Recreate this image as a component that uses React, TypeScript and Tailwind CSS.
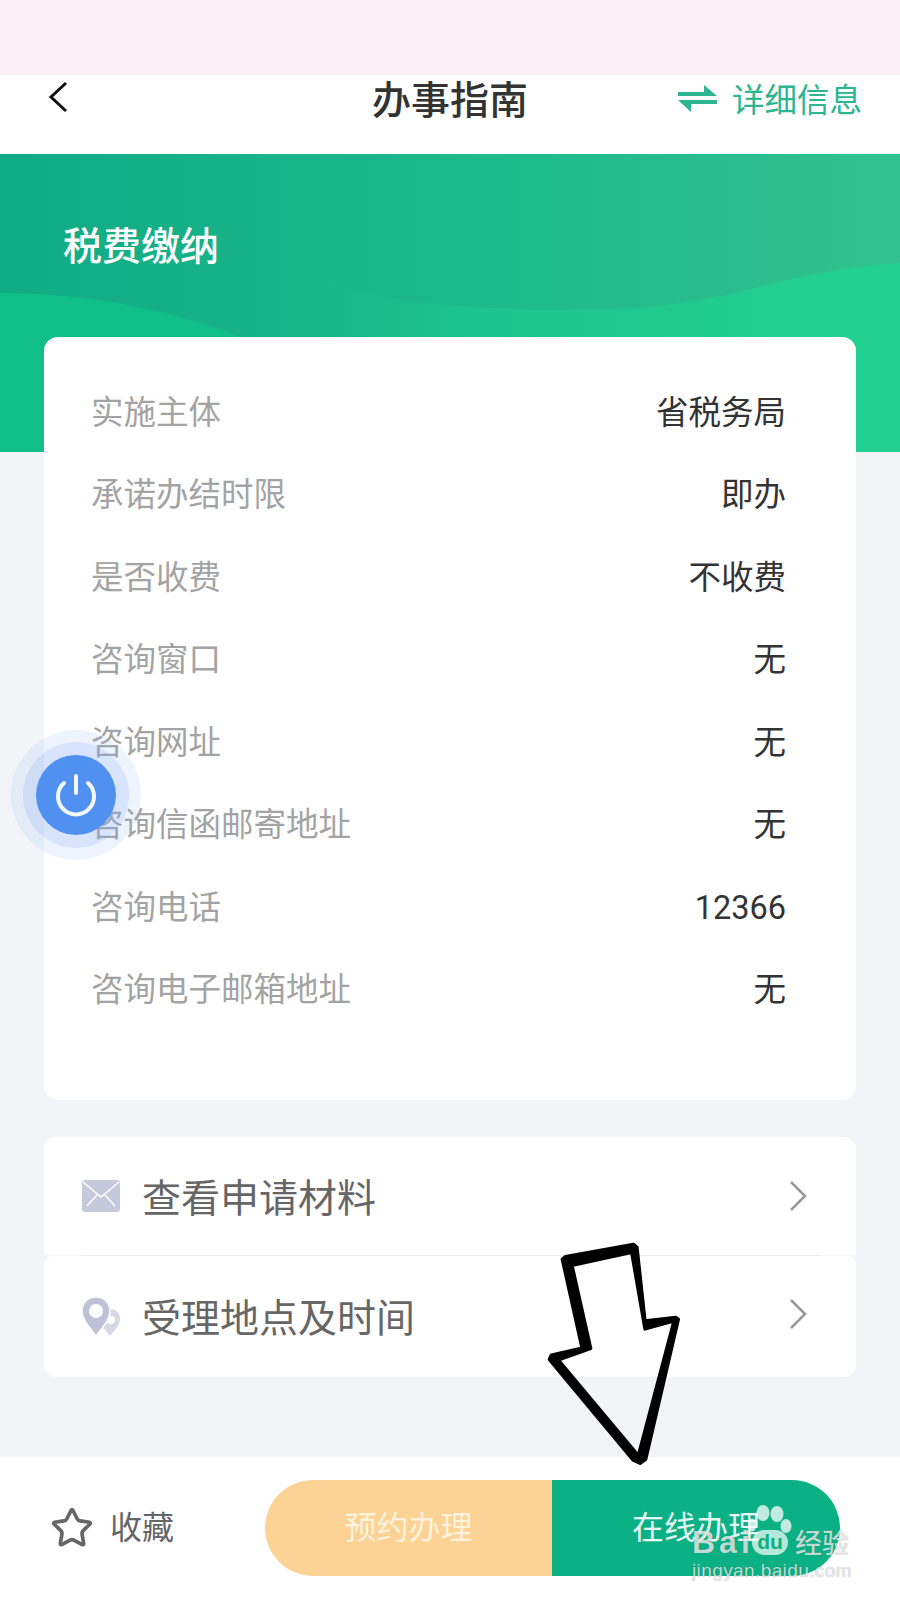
import React from 'react';
import { Star } from 'lucide-react';

const infoRows = [
  { label: '实施主体', value: '省税务局' },
  { label: '承诺办结时限', value: '即办' },
  { label: '是否收费', value: '不收费' },
  { label: '咨询窗口', value: '无' },
  { label: '咨询网址', value: '无' },
  { label: '咨询信函邮寄地址', value: '无' },
  { label: '咨询电话', value: '12366' },
  { label: '咨询电子邮箱地址', value: '无' },
];

const Chevron = () => (
  <svg width="20" height="32" viewBox="0 0 20 32" fill="none" stroke="#9a9a9a" strokeWidth="2.6">
    <path d="M3 2 L17 16 L3 30" />
  </svg>
);

const MailIcon = () => (
  <svg width="38" height="32" viewBox="0 0 38 32">
    <rect width="38" height="32" rx="3" fill="#c6c9dc" />
    <path d="M1 2 L19 17 L37 2 M5 26 L15 15 M33 26 L23 15" fill="none" stroke="#fff" strokeWidth="1.6" />
  </svg>
);

const PinsIcon = () => (
  <svg width="38" height="40" viewBox="0 0 38 40">
    <path d="M28 12 C34 12 38 16 38 22 C38 28 32 34 28 39 C24 34 18 28 18 22 C18 16 22 12 28 12 Z" fill="#d6d8e5" />
    <circle cx="29" cy="23" r="4" fill="#fff" />
    <path d="M14 0 C22 0 28 6 28 14 C28 23 20 31 14 39 C8 31 0 23 0 14 C0 6 6 0 14 0 Z" fill="#bfc2d6" stroke="#fff" strokeWidth="1.5" />
    <circle cx="14" cy="14" r="7" fill="#fff" />
  </svg>
);

export default function App() {
  return (
    <div className="relative w-[900px] h-[1600px] overflow-hidden flex flex-col bg-[#f2f4f8] font-['Roboto','Noto_Sans_CJK_SC',sans-serif]">
      {/* status bar strip */}
      <div className="h-[75px] shrink-0 bg-[#fbeff8]" />

      {/* nav */}
      <div className="h-[79px] shrink-0 bg-white flex items-start justify-between pl-[48px] pr-[38px] relative">
        <svg className="mt-[6px]" width="20" height="32" viewBox="0 0 20 32" fill="none" stroke="#111" strokeWidth="3">
          <path d="M18 2 L3 16 L18 30" />
        </svg>
        <div className="absolute left-0 right-0 top-[1px] text-center text-[39px] leading-[50px] font-medium text-[#333]">办事指南</div>
        <div className="flex items-center gap-[14px] text-[#2cb58e] text-[32.5px] leading-[44px]">
          <svg width="40" height="28" viewBox="0 0 40 28" fill="#2cb58e">
            <path d="M0 7 H26 V0 L39 11 H0 Z" />
            <path d="M39 15 H0 L13 27 V19 H39 Z" />
          </svg>
          <span className="mt-[4px]">详细信息</span>
        </div>
      </div>

      {/* green banner */}
      <div className="relative h-[298px] shrink-0 overflow-hidden bg-gradient-to-r from-[#10ab84] via-[#1fbb8b] via-60% to-[#33c090]">
        <svg className="absolute inset-0" width="900" height="298" viewBox="0 0 900 298">
          <defs>
            <linearGradient id="rightWave" gradientUnits="userSpaceOnUse" x1="300" y1="0" x2="900" y2="0">
              <stop offset="0" stopColor="#14c08a" stopOpacity="0" />
              <stop offset="0.3" stopColor="#1cc98e" stopOpacity="0.7" />
              <stop offset="1" stopColor="#22d191" />
            </linearGradient>
          </defs>
          <path
            d="M300 115 C340 140 420 156 574 156 C640 156 690 150 746 136 C800 122 850 112 900 109 V298 H300 Z"
            fill="url(#rightWave)"
          />
          <path d="M0 139 C85 139 170 155 240 183 V298 H0 Z" fill="#10bf87" />
        </svg>
        <div className="relative pl-[63px] pt-[67px] text-[39px] leading-[52px] font-medium text-white">税费缴纳</div>
      </div>

      {/* info card */}
      <div className="relative mx-[44px] -mt-[115px] h-[763px] shrink-0 rounded-[14px] bg-white pl-[47px] pr-[70px] pt-[35px] flex flex-col">
        {infoRows.map((row) => (
          <div key={row.label} className="h-[82.5px] shrink-0 flex items-center justify-between text-[32.5px]">
            <span className="text-[#a3a3a3]">{row.label}</span>
            <span className="text-[#333]">{row.value}</span>
          </div>
        ))}
      </div>

      {/* links */}
      <div className="mx-[44px] mt-[37px] flex flex-col shrink-0">
        <div className="h-[118px] rounded-t-[12px] bg-white pl-[38px] pr-[48px] flex items-center gap-[22px] text-[39px] text-[#666]">
          <MailIcon />
          <span className="flex-1 pt-[6px]">查看申请材料</span>
          <Chevron />
        </div>
        <div className="mx-[38px] h-px bg-[#ececec]" />
        <div className="h-[121px] rounded-b-[12px] rounded-t-[8px] bg-white pl-[38px] pr-[48px] flex items-center gap-[22px] text-[39px] text-[#666]">
          <PinsIcon />
          <span className="flex-1 pt-[6px]">受理地点及时间</span>
          <div className="mb-[5px]">
            <Chevron />
          </div>
        </div>
      </div>

      {/* bottom bar */}
      <div className="mt-auto h-[143px] shrink-0 bg-white pl-[50px] pt-[23px] flex items-start">
        <div className="w-[215px] h-[96px] flex items-center gap-[16px] text-[32px] text-[#666]">
          <Star size={44} strokeWidth={2} className="text-[#666]" />
          <span>收藏</span>
        </div>
        <div className="w-[287px] h-[96px] rounded-l-full bg-[#fdd295] text-[32px] text-[#fff3dd] flex items-center justify-center">预约办理</div>
        <div className="w-[288px] h-[96px] rounded-r-full bg-[#0bb184] text-[32px] text-white/90 flex items-center justify-center">在线办理</div>
      </div>

      {/* floating power button */}
      <div className="absolute left-[11px] top-[730px] w-[130px] h-[130px] rounded-full bg-[#8fb4f5]/15 flex items-center justify-center">
        <div className="w-[106px] h-[106px] rounded-full bg-[#7ea6ee]/20 flex items-center justify-center">
          <div className="w-[80px] h-[80px] rounded-full bg-[#5090f0] flex items-center justify-center">
            <svg width="44" height="44" viewBox="0 0 44 44" fill="none" stroke="#f3f8ff" strokeWidth="4" strokeLinecap="round">
              <path d="M22 3 V20" />
              <path d="M10 10 A18 18 0 1 0 34 10" />
            </svg>
          </div>
        </div>
      </div>

      {/* hand drawn arrow */}
      <svg className="absolute left-[500px] top-[1220px]" width="400" height="380" viewBox="0 0 1200 1140">
        <path
          fillRule="evenodd"
          fill="#000"
          stroke="#000"
          strokeWidth="10"
          strokeLinejoin="round"
          d="M187 118 L196 110 L400 73 L411 82 L435 303 L527 292 L535 298 L437 718 L420 730 L399 720 L148 418 L154 405 L246 384 Z M216 136 L395 97 L435 327 L522 303 L415 707 L175 420 L272 385 Z"
        />
      </svg>

      {/* watermark */}
      <div className="absolute left-[692px] top-[1501px] w-[160px] text-white/75 font-['Liberation_Sans',sans-serif] [text-shadow:0_0_1px_rgba(0,0,0,0.4)]">
        <svg className="absolute left-[56px] top-[3px]" width="44" height="34" viewBox="0 0 44 34" fill="currentColor">
          <ellipse cx="15" cy="9" rx="6.5" ry="8" />
          <ellipse cx="29" cy="10" rx="6.5" ry="8" />
          <ellipse cx="38" cy="22" rx="5.5" ry="7" />
          <ellipse cx="4" cy="21" rx="4.5" ry="6.5" />
        </svg>
        <div className="pt-[27px] h-[55px] flex items-center">
          <span className="w-[60px] text-[32px] leading-[28px] font-bold tracking-[4px]">Bai</span>
          <span className="w-[36px] h-[25px] rounded-full bg-white/70 text-center text-[21px] leading-[24px] font-bold text-[#0bb184] [text-shadow:none]">du</span>
          <span className="ml-[7px] text-[27px] leading-[28px] font-medium font-['Noto_Sans_CJK_SC',sans-serif]">经验</span>
        </div>
        <div className="mt-[5px] text-[19px] leading-[20px] tracking-[0.4px] whitespace-nowrap">jingyan.baidu.com</div>
      </div>
    </div>
  );
}
